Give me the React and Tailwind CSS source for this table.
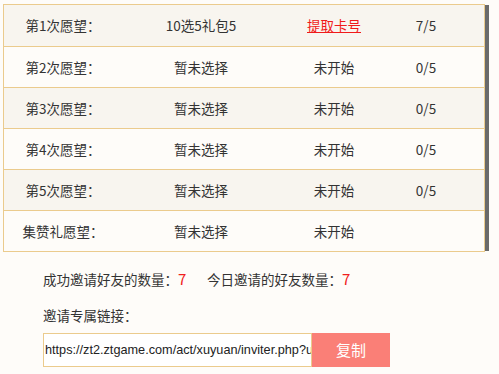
export default function App() {
  const rows = [
    { a: "第1次愿望：", b: "10选5礼包5", c: "提取卡号", d: "7/5", link: true },
    { a: "第2次愿望：", b: "暂未选择", c: "未开始", d: "0/5" },
    { a: "第3次愿望：", b: "暂未选择", c: "未开始", d: "0/5" },
    { a: "第4次愿望：", b: "暂未选择", c: "未开始", d: "0/5" },
    { a: "第5次愿望：", b: "暂未选择", c: "未开始", d: "0/5" },
    { a: "集赞礼愿望：", b: "暂未选择", c: "未开始", d: "" },
  ];
  return (
    <div
      className="w-[499px] h-[374px] bg-[#fefcf9] overflow-hidden text-[#333] text-[13.5px]"
      style={{ fontFamily: '"Microsoft YaHei", "Noto Sans CJK SC", sans-serif' }}
    >
      <div className="flex pt-[4px] pl-[3px]">
        <div className="w-[482px] border border-[#ebcb8d]">
          {rows.map((r, i) => (
            <div
              key={i}
              className={`grid grid-cols-[118px_158px_108px_76px_1fr] h-[41px] items-center ${
                i > 0 ? "border-t border-[#ebcb8d]" : ""
              } ${i % 2 === 0 ? "bg-[#f8f5ef]" : "bg-[#fefcf9]"}`}
            >
              <div className="text-center">{r.a}</div>
              <div className="text-center">{r.b}</div>
              <div className="text-center">
                {r.link ? (
                  <span className="text-[#f01a1a] underline">{r.c}</span>
                ) : (
                  r.c
                )}
              </div>
              <div className="text-center">{r.d}</div>
              <div></div>
            </div>
          ))}
        </div>
        <div className="w-[4px] h-[246px] mt-[1px] bg-[#6a6a6a]"></div>
      </div>
      <div className="pl-[43px] pt-[17px]">
        <div className="flex h-[20px] items-center leading-[20px]">
          <span>成功邀请好友的数量：</span>
          <span className="text-[#f02020] text-[15px] w-[29px]">7</span>
          <span>今日邀请的好友数量：</span>
          <span className="text-[#f02020] text-[15px]">7</span>
        </div>
        <div className="h-[20px] leading-[20px] mt-[16px]">邀请专属链接：</div>
        <div className="flex mt-[8px] h-[34px]">
          <div
            className="w-[269px] h-[34px] border border-[#ebcb8d] bg-white overflow-hidden whitespace-nowrap pl-[1px] leading-[32px] text-[12.7px] text-[#222]"
            style={{ fontFamily: '"Liberation Sans", Arial, sans-serif' }}
          >
            https://zt2.ztgame.com/act/xuyuan/inviter.php?u
          </div>
          <div className="w-[78px] h-[34px] bg-[#fa7f77] text-white text-[15px] flex items-center justify-center">
            复制
          </div>
        </div>
      </div>
    </div>
  );
}
